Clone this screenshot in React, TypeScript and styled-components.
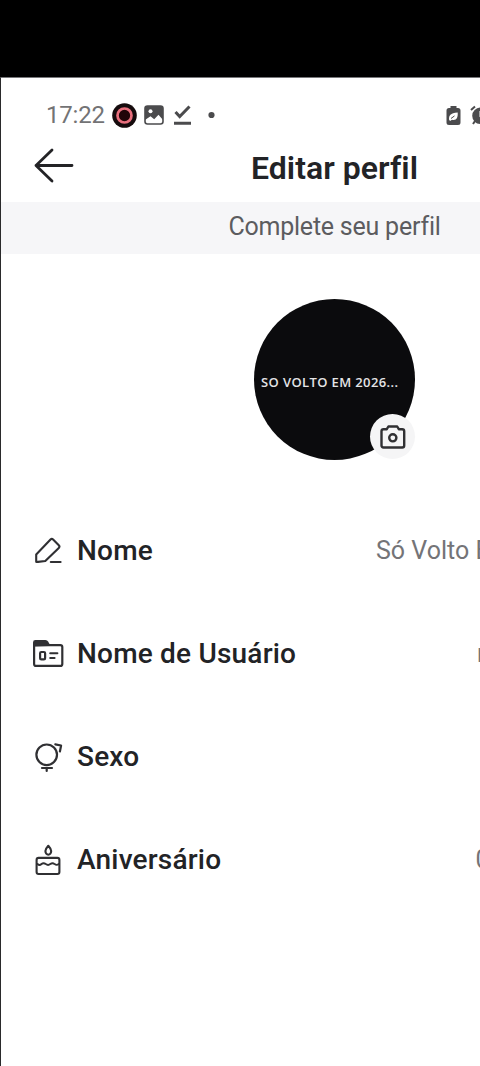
import React from "react";
import styled, { createGlobalStyle } from "styled-components";

const GlobalStyle = createGlobalStyle`
  * { box-sizing: border-box; }
  body { margin: 0; background: #fff; overflow: hidden; }
`;

const Viewport = styled.div`
  width: 480px;
  height: 1066px;
  overflow: hidden;
  background: #fff;
  display: flex;
  flex-direction: column;
  font-family: Roboto, "Liberation Sans", sans-serif;
  color: #222326;
  white-space: nowrap;
`;

const TopBand = styled.div`
  height: 77px;
  flex: none;
  background: #000;
`;

const Screen = styled.main`
  width: 668px;
  flex: 1;
  border-left: 1px solid #2a2a2b;
  border-top: 1px solid #77777a;
  display: flex;
  flex-direction: column;
`;

const StatusBar = styled.div`
  height: 60px;
  padding: 14px 0 0 45px;
  display: flex;
  align-items: center;
`;

const Clock = styled.span`
  width: 66px;
  font-size: 24px;
  font-weight: 400;
  letter-spacing: -0.2px;
  line-height: 28px;
  color: #737375;
`;

const StatusIcons = styled.div<{ $gap: number; $start?: number }>`
  display: flex;
  align-items: center;
  gap: ${(p) => p.$gap}px;
  margin-left: ${(p) => p.$start ?? 0}px;
`;

const TitleBar = styled.header`
  height: 64px;
  display: grid;
  grid-template-columns: 100px 1fr 100px;
  align-items: center;
`;

const BackButton = styled.button`
  border: 0;
  background: none;
  padding: 0 0 9px 32px;
  display: flex;
`;

const Title = styled.h1`
  margin: 0;
  font-size: 32px;
  font-weight: 600;
  line-height: 40px;
  letter-spacing: 0.05px;
  text-align: center;
  padding-bottom: 5px;
`;

const Notice = styled.div`
  height: 52px;
  background: #f6f6f8;
  color: #5c5c5f;
  font-size: 25px;
  letter-spacing: -0.22px;
  line-height: 49px;
  text-align: center;
`;

const AvatarArea = styled.section`
  height: 245px;
  padding-top: 45px;
  display: flex;
  justify-content: center;
`;

const Avatar = styled.div`
  position: relative;
  width: 161px;
  height: 161px;
  border-radius: 50%;
  background: #0b0b0d;
  color: #e4e4e6;
  font-family: "Open Sans", sans-serif;
  font-size: 13px;
  font-weight: 600;
  letter-spacing: 0.38px;
  line-height: 18px;
  padding: 74px 0 0 7px;
`;

const CameraBadge = styled.div`
  position: absolute;
  left: 116px;
  top: 115px;
  width: 45px;
  height: 45px;
  border-radius: 50%;
  background: #f5f5f6;
  display: flex;
  align-items: center;
  justify-content: center;
`;

const Fields = styled.ul`
  margin: 0;
  padding: 0;
  list-style: none;
`;

const Field = styled.li`
  height: 103px;
  padding-left: 30px;
  display: flex;
  align-items: center;
`;

const FieldIcon = styled.span`
  width: 46px;
  display: flex;
`;

const Label = styled.span`
  flex: 1;
  font-size: 28px;
  font-weight: 500;
  letter-spacing: 0.2px;
  line-height: 36px;
`;

const Value = styled.span<{ $width: number }>`
  width: ${(p) => p.$width}px;
  font-size: 25px;
  line-height: 36px;
  color: #747477;
`;

const line = { fill: "none", stroke: "#303033", strokeLinecap: "round", strokeLinejoin: "round" } as const;

const PencilIcon = () => (
  <svg width="34" height="34" viewBox="0 0 34 34" {...line} strokeWidth="2.1">
    <path d="M5.2 27.8V20.400L19.500 5.600q1.300-1.300 2.600 0L27.800 11.300q1.300 1.300 0 2.600L14.300 27l-7.300.9q-1.800.2-1.800-.1Z" />
    <path d="M19.800 28h9.800" />
  </svg>
);

const CardIcon = () => (
  <svg width="34" height="34" viewBox="0 0 34 34" {...line} strokeWidth="2.2">
    <path d="M3.1 8.5V5.4q0-1.3 1.3-1.3h10q1.2 0 2 1.3l1.3 2.4Z" fill="#303033" />
    <path d="M3.1 8.1h26.2q2 0 2 2v16.8q0 2-2 2H5.1q-2 0-2-2Z" />
    <rect x="9.100" y="15" width="5" height="7.400" rx="1.2" />
    <path d="M19.200 16.3h7.2M19.200 21h4.400" strokeWidth="2" />
  </svg>
);

const GenderIcon = () => (
  <svg width="34" height="34" viewBox="0 0 34 34" {...line} strokeWidth="2.2">
    <circle cx="15.7" cy="14.8" r="10.3" />
    <path d="M11 28h10M15.7 28v3" />
    <path d="M24.3 4.300l5.800 1.200-1.200 6" />
  </svg>
);

const CakeIcon = () => (
  <svg width="34" height="34" viewBox="0 0 34 34" {...line} strokeWidth="2.1">
    <path d="M17.3 2.8c-2 2.2-2.9 3.8-2.9 5.3a2.9 3.600 0 0 0 5.8 0c0-1.500-.9-3.100-2.900-5.300Z" />
    <rect x="5.600" y="14.900" width="22.800" height="16.100" rx="2" />
    <path d="M6.500 21q2 2 4 0 2-1.700 4.300.1 2.300 1.700 4.500 0 2.300-1.700 4.300 0 2.200 1.600 4.200-.1" strokeWidth="1.900" />
  </svg>
);

const fields = [
  { label: "Nome", value: "Só Volto Em 2026...", width: 292, icon: <PencilIcon /> },
  { label: "Nome de Usuário", value: "movolto2026", width: 191, icon: <CardIcon /> },
  { label: "Sexo", value: "", width: 100, icon: <GenderIcon /> },
  { label: "Aniversário", value: "01/01/2000", width: 192.5, icon: <CakeIcon /> },
];

export default function App() {
  return (
    <>
      <GlobalStyle />
      <Viewport>
        <TopBand />
        <Screen>
          <StatusBar>
            <Clock>17:22</Clock>
            <StatusIcons $gap={7}>
              <svg width="25" height="25" viewBox="0 0 25 25">
                <circle cx="12.500" cy="12.500" r="12.300" fill="#150b0d" />
                <circle cx="12.500" cy="12.500" r="7" fill="#210509" stroke="#e86f7d" strokeWidth="2.700" />
              </svg>
              <svg width="20" height="20" viewBox="0 0 20 20">
                <rect x="1" y="1" width="18" height="18" rx="2.500" fill="#fff" stroke="#4b4b4d" strokeWidth="1.600" />
                <path d="M1 15V3q0-2 2-2h14q2 0 2 2v12l-4.500-5.200-4.300 4.400-3.700-3Z" fill="#4b4b4d" />
                <circle cx="6.500" cy="6.300" r="2" fill="#fff" />
              </svg>
              <svg width="21" height="22" viewBox="0 0 21 22" fill="none" stroke="#4b4b4d" strokeWidth="3">
                <path d="M4.500 8l4.200 4.600L18.500 2.500M3 19.300h17" />
              </svg>
              <svg width="20" height="20" viewBox="0 0 20 20">
                <circle cx="12.500" cy="10" r="3.100" fill="#4b4b4d" />
              </svg>
            </StatusIcons>
            <StatusIcons $gap={9} $start={226.5}>
              <svg width="15" height="21" viewBox="0 0 15 21">
                <path d="M4.500 3V1h6v2H12q2.500 0 2.500 2.500v12q0 2.500-2.500 2.500H3Q.500 20 .500 17.500v-12Q.500 3 3 3Z" fill="#4b4b4d" />
                <path d="M3 14.600c0-4 1-6.600 8.700-7.100.3 5-1 8.300-5.700 7.300l-2 1.200Z" fill="#fff" />
                <path d="M5 13.500l3.500-2.600" stroke="#4b4b4d" />
              </svg>
              <svg width="21" height="21" viewBox="0 0 21 21">
                <circle cx="10.500" cy="10.800" r="8.300" fill="#4b4b4d" />
                <path d="M1 5l4-3.500M20 5l-4-3.500M5 16l-2 3M16 16l2 3" stroke="#4b4b4d" strokeWidth="2" />
                <path d="M10.500 6v5.300l3 2" fill="none" stroke="#fff" strokeWidth="2" />
              </svg>
            </StatusIcons>
          </StatusBar>
          <TitleBar>
            <BackButton aria-label="Voltar">
              <svg width="42" height="36" viewBox="0 0 42 36" {...line} stroke="#232326" strokeWidth="2.800">
                <path d="M39 17.500H3M19 2L3 17.500l16 15.500" />
              </svg>
            </BackButton>
            <Title>Editar perfil</Title>
          </TitleBar>
          <Notice>Complete seu perfil</Notice>
          <AvatarArea>
            <Avatar>
              SO VOLTO EM 2026...
              <CameraBadge>
                <svg width="26" height="26" viewBox="0 0 26 26" {...line} strokeWidth="2.400">
                  <path d="M3.500 5.200h3.300L8.400 2.500h8.800l1.600 2.700h3.400q2 0 2 2v14.300q0 2-2 2H3.500q-2 0-2-2V7.200q0-2 2-2Z" />
                  <circle cx="12.800" cy="13.800" r="3.600" />
                </svg>
              </CameraBadge>
            </Avatar>
          </AvatarArea>
          <Fields>
            {fields.map((field) => (
              <Field key={field.label}>
                <FieldIcon>{field.icon}</FieldIcon>
                <Label>{field.label}</Label>
                <Value $width={field.width}>{field.value}</Value>
              </Field>
            ))}
          </Fields>
        </Screen>
      </Viewport>
    </>
  );
}
